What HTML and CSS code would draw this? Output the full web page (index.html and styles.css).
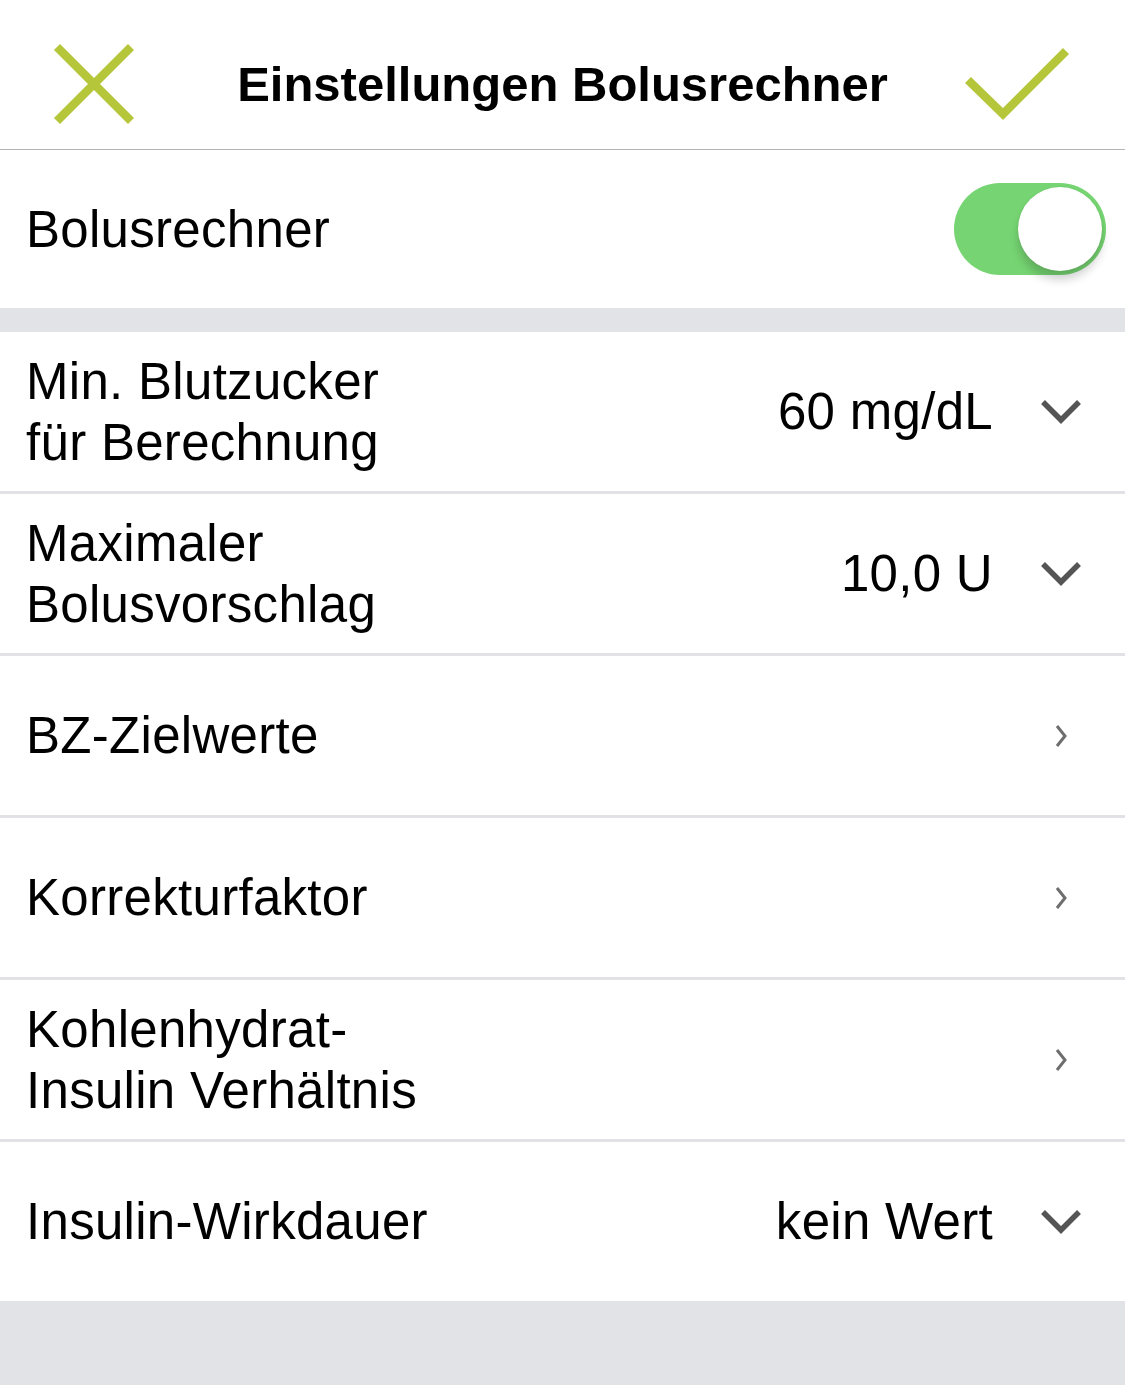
FILE: index.html
```html
<!DOCTYPE html>
<html lang="de">
<head>
    <meta charset="UTF-8">
    <meta name="viewport" content="width=device-width, initial-scale=1.0">
    <title>Einstellungen Bolusrechner</title>
    <link rel="stylesheet" href="styles.css">
</head>
<body>
    <!-- Navigation bar -->
    <header class="navbar">
        <button class="nav-btn nav-cancel" aria-label="Abbrechen">
            <svg width="90" height="90" viewBox="0 0 90 90">
                <path d="M8 8 L82 82 M82 8 L8 82" stroke="#b5c63a" stroke-width="8.5" fill="none"/>
            </svg>
        </button>
        <h1 class="nav-title">Einstellungen Bolusrechner</h1>
        <button class="nav-btn nav-save" aria-label="Speichern">
            <svg width="130" height="90" viewBox="0 0 130 90">
                <polyline points="18,41 53,75 116,12" stroke="#b5c63a" stroke-width="8.5" fill="none"/>
            </svg>
        </button>
    </header>

    <!-- Switch section -->
    <section class="group">
        <div class="row row-switch">
            <span class="label">Bolusrechner</span>
            <div class="toggle on">
                <span class="knob"></span>
            </div>
        </div>
    </section>

    <div class="spacer"></div>

    <!-- Settings section -->
    <section class="group">
        <div class="row">
            <span class="label">Min. Blutzucker<br>für Berechnung</span>
            <span class="value">60 mg/dL</span>
            <span class="icon">
                <svg width="42" height="28" viewBox="0 0 42 28"><polyline points="3,4 21,22 39,4" class="chev-down"/></svg>
            </span>
        </div>
        <div class="row">
            <span class="label">Maximaler<br>Bolusvorschlag</span>
            <span class="value">10,0 U</span>
            <span class="icon">
                <svg width="42" height="28" viewBox="0 0 42 28"><polyline points="3,4 21,22 39,4" class="chev-down"/></svg>
            </span>
        </div>
        <div class="row">
            <span class="label">BZ-Zielwerte</span>
            <span class="icon">
                <svg width="14" height="26" viewBox="0 0 14 26"><polyline points="3,3 11,13 3,23" class="chev-right"/></svg>
            </span>
        </div>
        <div class="row">
            <span class="label">Korrekturfaktor</span>
            <span class="icon">
                <svg width="14" height="26" viewBox="0 0 14 26"><polyline points="3,3 11,13 3,23" class="chev-right"/></svg>
            </span>
        </div>
        <div class="row">
            <span class="label">Kohlenhydrat-<br>Insulin Verhältnis</span>
            <span class="icon">
                <svg width="14" height="26" viewBox="0 0 14 26"><polyline points="3,3 11,13 3,23" class="chev-right"/></svg>
            </span>
        </div>
        <div class="row">
            <span class="label">Insulin-Wirkdauer</span>
            <span class="value">kein Wert</span>
            <span class="icon">
                <svg width="42" height="28" viewBox="0 0 42 28"><polyline points="3,4 21,22 39,4" class="chev-down"/></svg>
            </span>
        </div>
    </section>
</body>
</html>
```

FILE: styles.css
```css
body {
    font-family: "Liberation Sans", Arial, sans-serif;
    background-color: #e2e3e7;
    margin: 0;
    color: #000;
}

.navbar {
    display: grid;
    grid-template-columns: 1fr auto 1fr;
    align-items: center;
    height: 131px;
    padding-top: 18px;
    background-color: #fff;
    border-bottom: 1px solid #b4b4b4;
}

.nav-btn {
    background: none;
    border: none;
    padding: 0;
    display: flex;
    cursor: pointer;
}

.nav-cancel {
    justify-self: start;
    margin-left: 49px;
}

.nav-save {
    justify-self: end;
    margin-right: 45px;
}

.nav-title {
    margin: 0;
    font-size: 49px;
    font-weight: bold;
}

.group {
    background-color: #fff;
}

.spacer {
    height: 24px;
}

.row {
    display: flex;
    align-items: center;
    height: 159px;
    padding-left: 26px;
    background-color: #fff;
}

.row + .row {
    border-top: 3px solid #e1e1e6;
}

.row-switch {
    height: 158px;
}

.label {
    flex: 1;
    font-size: 51px;
    line-height: 61px;
    letter-spacing: 0.3px;
}

.value {
    font-size: 51px;
    line-height: 61px;
    margin-right: 4px;
    letter-spacing: 0.3px;
}

.icon {
    width: 128px;
    display: flex;
    justify-content: center;
    align-items: center;
}

.chev-down {
    fill: none;
    stroke: #555;
    stroke-width: 5.5;
}

.chev-right {
    fill: none;
    stroke: #6e6e6e;
    stroke-width: 3;
}

.toggle {
    position: relative;
    width: 152px;
    height: 92px;
    margin-right: 19px;
    border-radius: 46px;
    background-color: #e5e5ea;
}

.toggle.on {
    background-color: #76d572;
}

.toggle .knob {
    position: absolute;
    top: 4px;
    right: 4px;
    width: 84px;
    height: 84px;
    border-radius: 50%;
    background-color: #fff;
    box-shadow: 0 9px 10px rgba(0, 0, 0, 0.18), 0 0 2px rgba(0, 0, 0, 0.1);
}
```
